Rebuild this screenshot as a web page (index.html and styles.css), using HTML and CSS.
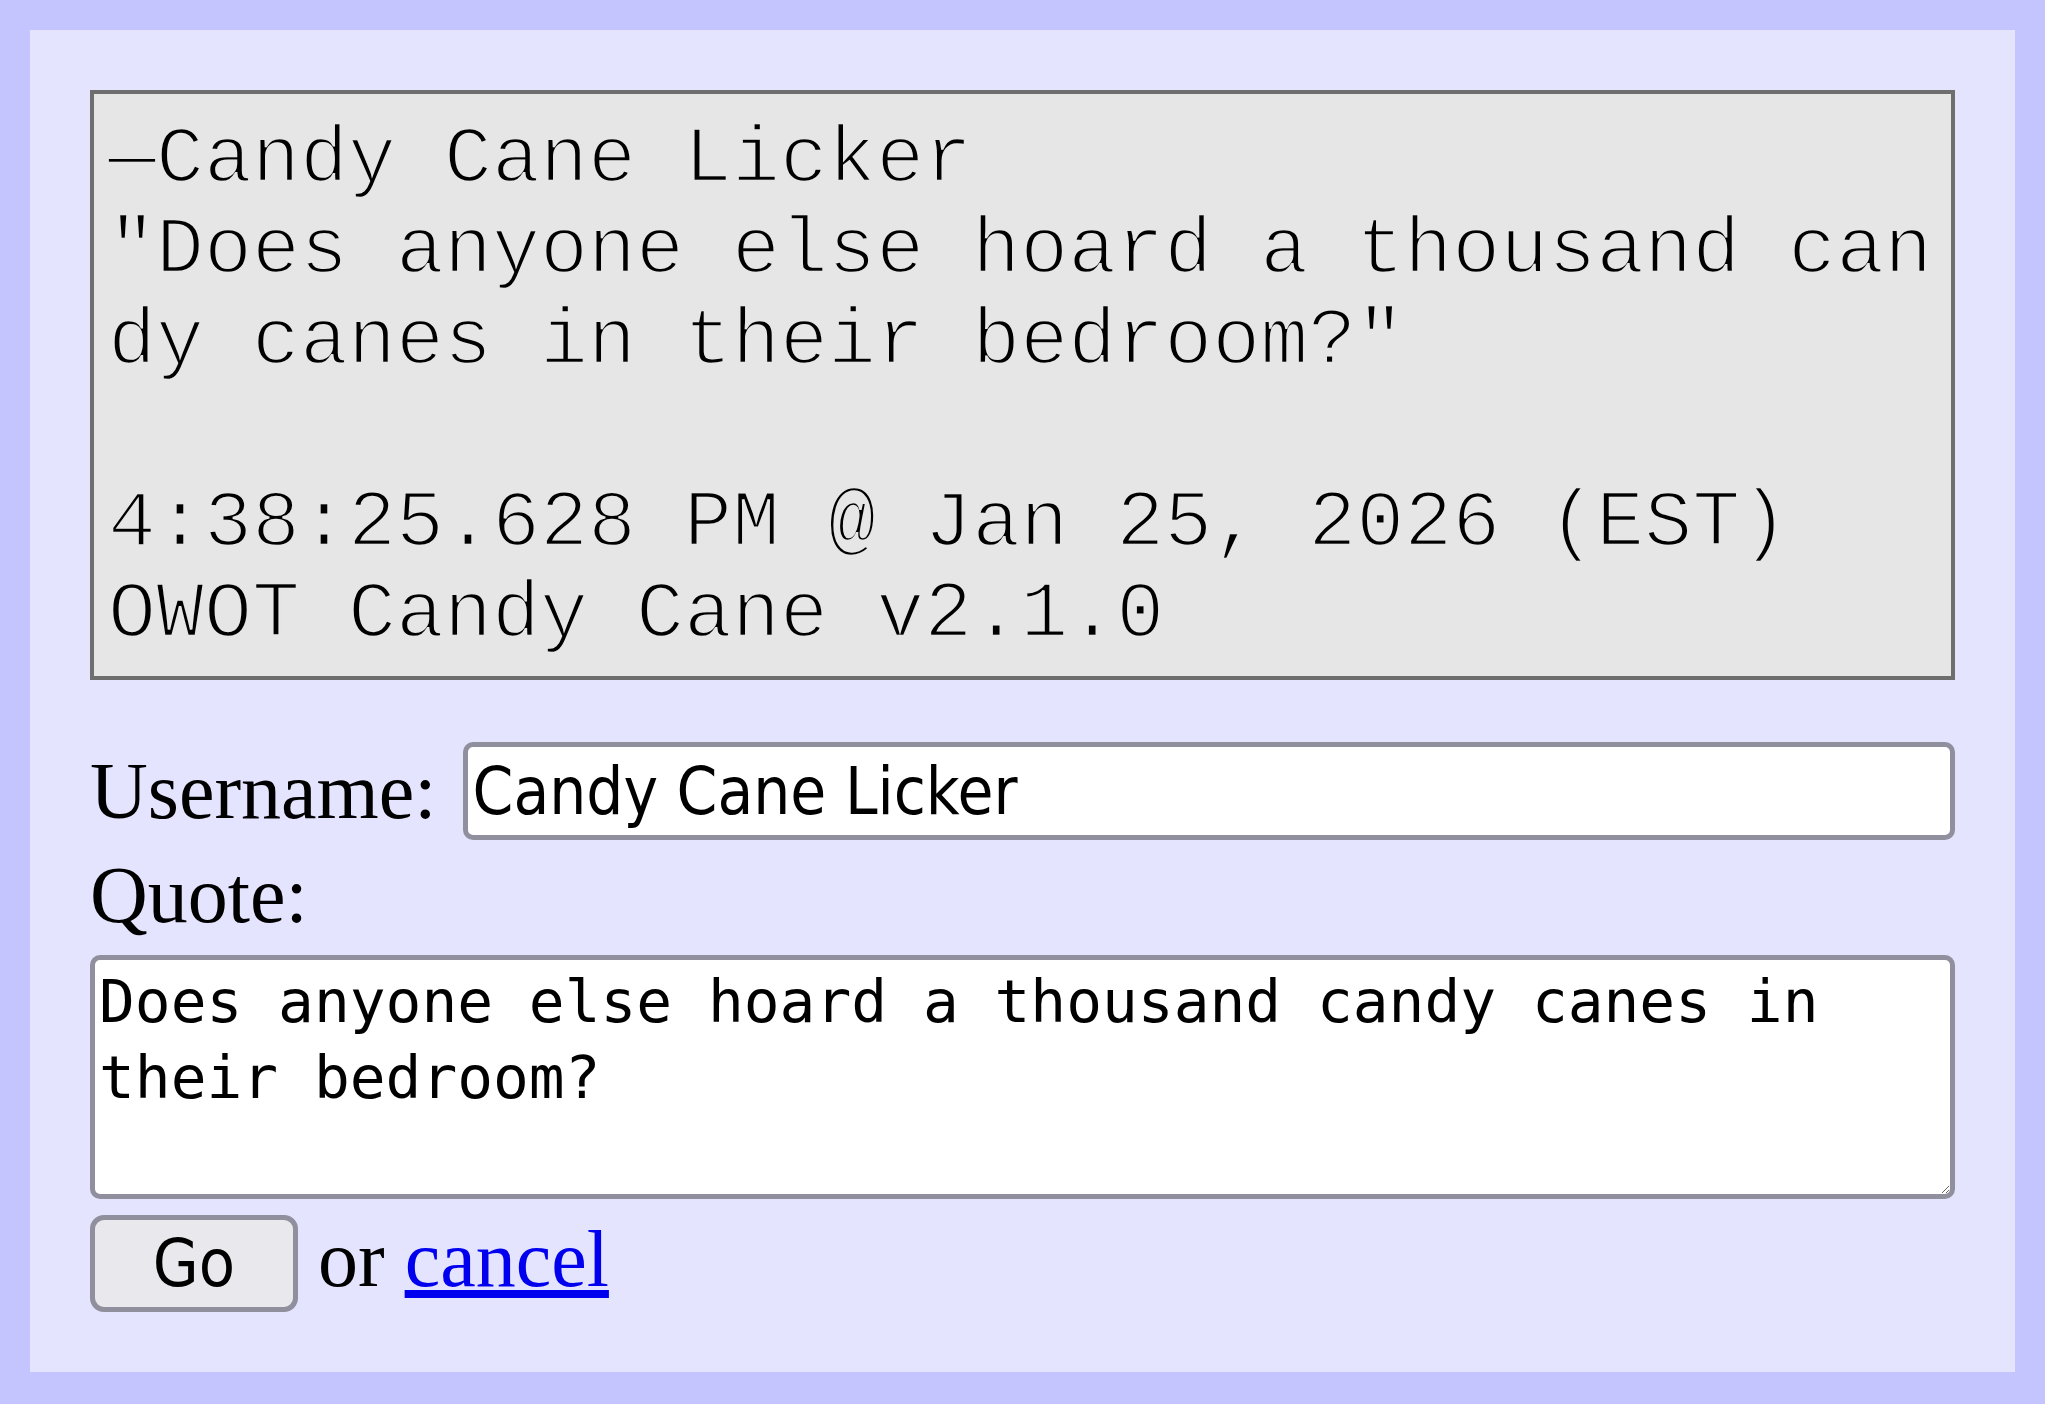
FILE: index.html
```html
<!DOCTYPE html>
<html lang="en">
<head>
<meta charset="utf-8">
<title>Candy Cane Quote</title>
<link rel="stylesheet" href="styles.css">
</head>
<body>
<div class="panel">
<pre class="quote-card">—Candy Cane Licker
"Does anyone else hoard a thousand candy canes in their bedroom?"

4:38:25.628 PM @ Jan 25, 2026 (EST)
OWOT Candy Cane v2.1.0</pre>
<form class="quote-form">
<div class="field-row">
<label class="label" for="username">Username:</label>
<input class="text-input" id="username" type="text" value="Candy Cane Licker">
</div>
<label class="label quote-label" for="quote">Quote:</label>
<textarea class="quote-input" id="quote">Does anyone else hoard a thousand candy canes in their bedroom?</textarea>
<div class="actions"><button class="go-button" type="button">Go</button> or <a class="cancel-link" href="#">cancel</a></div>
</form>
</div>
</body>
</html>
```

FILE: styles.css
```css
html, body {
  margin: 0;
  padding: 0;
}

body {
  background: #c4c4ff;
  padding: 30px;
  font-family: "Liberation Serif", "Times New Roman", serif;
  font-size: 80px;
  color: #000;
}

.panel {
  background: #e4e4ff;
  padding: 60px;
}

.quote-card {
  margin: 0;
  background: #e6e6e6;
  border: 4px solid #6e6e6e;
  padding: 20px 12px 16px 14px;
  font-family: "Courier New", "Liberation Mono", monospace;
  font-size: 80px;
  line-height: normal;
  white-space: pre-wrap;
  word-break: break-all;
  color: #000;
  -webkit-text-stroke: 2.5px #e6e6e6;
}

.quote-form {
  margin: 62px 0 0 0;
}

.field-row {
  display: flex;
  align-items: center;
  gap: 26px;
}

.label {
  display: block;
  font-family: "Liberation Serif", "Times New Roman", serif;
  font-size: 80px;
  line-height: normal;
  white-space: nowrap;
}

.text-input {
  flex: 1;
  min-width: 0;
  box-sizing: border-box;
  height: 98px;
  margin: 0;
  border: 5px solid #8f8f9d;
  border-radius: 10px;
  background: #fff;
  padding: 0 5px;
  font-family: "DejaVu Sans Condensed", "DejaVu Sans", sans-serif;
  font-stretch: condensed;
  font-size: 65px;
  color: #000;
  outline: none;
}

.quote-label {
  margin-top: 10px;
}

.quote-input {
  display: block;
  box-sizing: border-box;
  width: 100%;
  height: 244px;
  margin: 14px 0 0 0;
  border: 5px solid #8f8f9d;
  border-radius: 10px;
  background: #fff;
  padding: 4px 4px;
  font-family: "DejaVu Sans Mono", monospace;
  font-size: 59.5px;
  line-height: 76px;
  color: #000;
  resize: both;
  outline: none;
}

.actions {
  margin-top: 15px;
  font-family: "Liberation Serif", "Times New Roman", serif;
  font-size: 80px;
  line-height: normal;
}

.go-button {
  box-sizing: border-box;
  width: 208px;
  height: 97px;
  margin: 0;
  padding: 0;
  border: 5px solid #8f8f9d;
  border-radius: 14px;
  background: #e9e9ed;
  font-family: "DejaVu Sans Condensed", "DejaVu Sans", sans-serif;
  font-stretch: condensed;
  font-size: 66px;
  color: #000;
  vertical-align: baseline;
}

.cancel-link {
  color: #0000ee;
  text-decoration: underline;
}
```
